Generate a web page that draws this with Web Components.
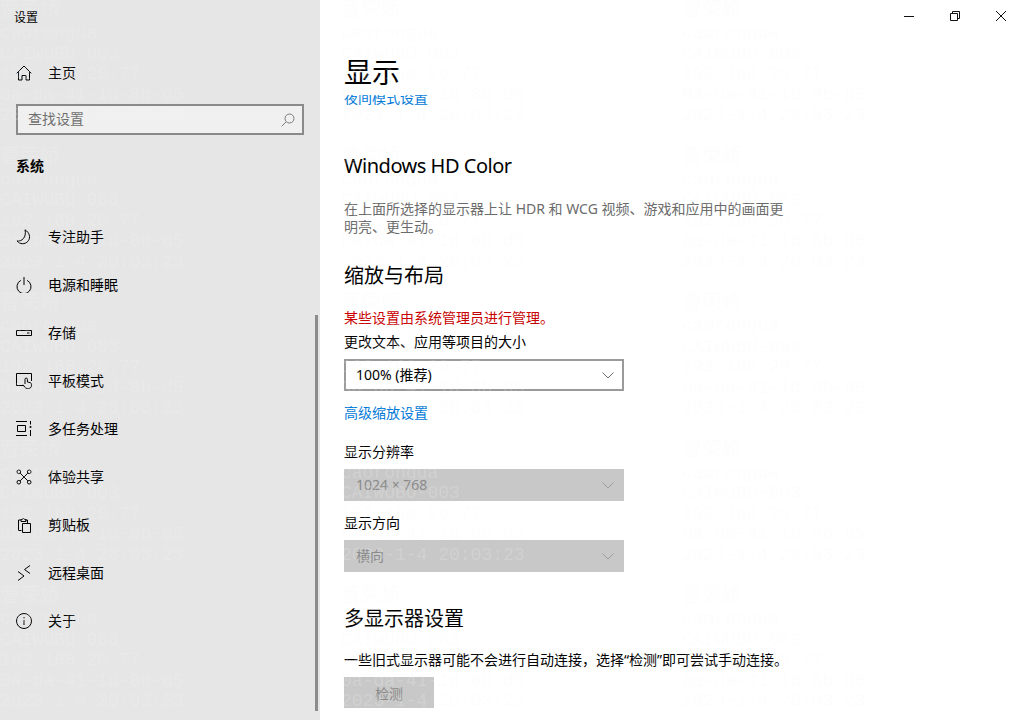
<!DOCTYPE html>
<html lang="zh">
<head>
<meta charset="utf-8">
<title>设置</title>
<style>
  html, body { margin: 0; height: 100%; overflow: hidden; background: #fff; }
  body { font: 14px "Noto Sans", "Noto Sans CJK SC", sans-serif; color: #000; }
</style>
</head>
<body>

<settings-app>
  <side-bar slot="side">
    <nav-item icon="home" slot="home">主页</nav-item>
    <search-box slot="search" placeholder="查找设置"></search-box>
    <nav-item icon="moon">专注助手</nav-item>
    <nav-item icon="power">电源和睡眠</nav-item>
    <nav-item icon="storage">存储</nav-item>
    <nav-item icon="tablet">平板模式</nav-item>
    <nav-item icon="tasks">多任务处理</nav-item>
    <nav-item icon="share">体验共享</nav-item>
    <nav-item icon="clipboard">剪贴板</nav-item>
    <nav-item icon="remote">远程桌面</nav-item>
    <nav-item icon="info">关于</nav-item>
  </side-bar>
  <display-page slot="main"></display-page>
</settings-app>

<script>
const ICONS = {
  home: '<path d="M.7 8.300 8 1l7.300 7.300M2.500 6.500v8.500h3.500v-4.500h4v4.500h3.500V6.500"/>',
  moon: '<path d="M9 .8c4.500 2.700 6 7.700 3 11.400-2.900 3.500-8.500 3.300-11-.3 4.800 1 9.800-3.800 8-11.100z"/>',
  power: '<path d="M4.800 3.400a7 7 0 1 0 6.400 0M8 0v8"/>',
  storage: '<path d="M.5 5.500h15v5H.5zM11 8h2.500"/>',
  tablet: '<path d="M7.500 12.500H.5V.500h15V8M9 11V6.300a1.200 1.200 0 0 1 2.400 0V9l2.600.6c.9.200 1.500.9 1.500 1.800v1.100c0 1.600-1.300 3-3 3h-1c-1.200 0-2.100-.5-2.800-1.400L7.200 11.800"/>',
  tasks: '<path d="M0 .5h11M0 14.500h11M1.500 4.500h8v6h-8zM14.500 0v3.500M14.500 9v6"/><circle cx="14.500" cy="6" r="1" fill="currentColor" stroke="none"/>',
  share: '<circle cx="2.800" cy="2.800" r="1.800"/><circle cx="13.200" cy="2.800" r="1.800"/><circle cx="2.800" cy="13.200" r="1.800"/><circle cx="13.200" cy="13.200" r="1.800"/><path d="m4.200 4.200 7.600 7.600M11.800 4.200l-7.600 7.600"/>',
  clipboard: '<path d="M5.500 13.500h-3V3h2.500M9 3h2.500v3M5 4.500V2.500h1.200a1.300 1.300 0 0 1 2.500 0H10v2zM6.500 6.500h8v9h-8z"/>',
  remote: '<path d="m2 6.500 6 4.500-6 4.500M14 .5 8.500 4.500l5.500 4"/>',
  info: '<circle cx="8" cy="8" r="7.500"/><path d="M8 7v5"/><circle cx="8" cy="4.800" r=".7" fill="currentColor" stroke="none"/>'
};

class NavItem extends HTMLElement {
  constructor() {
    super();
    this._root = this.attachShadow({mode: 'open'});
  }
  connectedCallback() {
    const icon = ICONS[this.getAttribute('icon')] || '';
    this._root.innerHTML = `
      <style>
        :host { display: flex; align-items: center; height: 48px; padding-left: 16px; color: #000; }
        svg { width: 16px; height: 16px; fill: none; stroke: currentColor; stroke-width: 1; flex: none; }
        span { margin-left: 16px; line-height: 20px; }
      </style>
      <svg viewBox="0 0 16 16">${icon}</svg>
      <span><slot></slot></span>
    `;
  }
}
customElements.define('nav-item', NavItem);

class SearchBox extends HTMLElement {
  constructor() {
    super();
    this._root = this.attachShadow({mode: 'open'});
  }
  connectedCallback() {
    this._root.innerHTML = `
      <style>
        :host {
          display: flex; align-items: center; justify-content: space-between;
          box-sizing: border-box; width: 288px; height: 31px; margin-left: 16px;
          padding: 0 7px 0 10px; border: 2px solid #8a8a8a; background: #f0f0f0; color: #6e6e6e;
        }
        span { margin-top: -4px; }
        svg { width: 14px; height: 14px; fill: none; stroke: #7a7a7a; stroke-width: 1; }
      </style>
      <span>${this.getAttribute('placeholder')}</span>
      <svg viewBox="0 0 14 14"><circle cx="8.500" cy="5.500" r="4.500"/><path d="M5.200 8.800.7 13.300"/></svg>
    `;
  }
}
customElements.define('search-box', SearchBox);

class SideBar extends HTMLElement {
  constructor() {
    super();
    this._root = this.attachShadow({mode: 'open'});
  }
  connectedCallback() {
    this._root.innerHTML = `
      <style>
        :host { display: flex; flex-direction: column; position: relative; width: 320px; height: 720px; background: #e6e6e6; }
        .title { font-size: 12px; line-height: 20px; margin: 8px 0 0 14px; color: #000; }
        ::slotted([slot="home"]) { margin-top: 21px; }
        ::slotted([slot="search"]) { margin-top: 7px; }
        .group { font-weight: 700; line-height: 20px; margin: 21px 0 37px 16px; color: #000; }
        .thumb { position: absolute; left: 315px; top: 315px; width: 3px; height: 396px; background: #8c8c8c; }
      </style>
      <div class="title">设置</div>
      <slot name="home"></slot>
      <slot name="search"></slot>
      <div class="group">系统</div>
      <slot></slot>
      <div class="thumb"></div>
    `;
  }
}
customElements.define('side-bar', SideBar);

class WinControls extends HTMLElement {
  constructor() {
    super();
    this._root = this.attachShadow({mode: 'open'});
  }
  connectedCallback() {
    this._root.innerHTML = `
      <style>
        :host { display: flex; justify-content: flex-end; height: 32px; margin-right: -11px; }
        span { display: flex; align-items: center; justify-content: center; width: 46px; }
        svg { width: 10px; height: 10px; fill: none; stroke: #111; stroke-width: 1; }
      </style>
      <span><svg viewBox="0 0 10 10"><path d="M0 5.500h10"/></svg></span>
      <span><svg viewBox="0 0 10 10"><path d="M.5 2.500h7v7h-7zM2.500 2.500v-2h7v7h-2"/></svg></span>
      <span><svg viewBox="0 0 10 10"><path d="m0 0 10 10M10 0 0 10"/></svg></span>
    `;
  }
}
customElements.define('win-controls', WinControls);

class ComboBox extends HTMLElement {
  constructor() {
    super();
    this._root = this.attachShadow({mode: 'open'});
  }
  connectedCallback() {
    this._root.innerHTML = `
      <style>
        :host {
          display: flex; align-items: center; justify-content: space-between;
          box-sizing: border-box; width: 280px; height: 32px; margin-top: 7px;
          padding: 0 10px 0 12px; background: #c8c8c8; color: #8a8a8a;
        }
        :host([enabled]) { background: #fff; border: 2px solid #9a9a9a; padding: 0 8px 0 10px; color: #000; }
        span { margin-top: -2px; }
        svg { width: 12px; height: 7px; fill: none; stroke: #9c9c9c; stroke-width: 1; }
        :host([enabled]) svg { stroke: #6a6a6a; }
      </style>
      <span><slot></slot></span>
      <svg viewBox="0 0 12 7"><path d="m.5.5 5.500 5.500L11.500.5"/></svg>
    `;
  }
}
customElements.define('combo-box', ComboBox);

class DisplayPage extends HTMLElement {
  constructor() {
    super();
    this._root = this.attachShadow({mode: 'open'});
  }
  connectedCallback() {
    this._root.innerHTML = `
      <style>
        :host { display: block; color: #000; }
        .page { padding-left: 24px; }
        h1 { margin: 20px 0 0; font-size: 28px; font-weight: 400; line-height: 40px; }
        h2 { margin: 0; font-size: 20px; font-weight: 400; line-height: 28px; }
        p { margin: 0; line-height: 20px; }
        a { display: block; color: #0078d7; line-height: 20px; text-decoration: none; }
        .clip { height: 11px; margin-top: 3px; overflow: hidden; }
        .clip a { margin-top: -7px; }
        .hdr { margin-top: 46px; letter-spacing: -.5px; }
        .note { width: 445px; margin-top: 20px; line-height: 18px; color: #6b6b6b; }
        .scale { margin-top: 26px; }
        .warn { margin-top: 18px; color: #c80000; }
        .label { margin-top: 12px; }
        .multi { margin-top: 33px; }
        .btn {
          display: flex; align-items: center; justify-content: center;
          width: 90px; height: 31px; margin-top: 7px; background: #c8c8c8; color: #8a8a8a;
        }
      </style>
      <win-controls></win-controls>
      <div class="page">
        <h1>显示</h1>
        <div class="clip"><a>夜间模式设置</a></div>
        <h2 class="hdr">Windows HD Color</h2>
        <p class="note">在上面所选择的显示器上让 HDR 和 WCG 视频、游戏和应用中的画面更明亮、更生动。</p>
        <h2 class="scale">缩放与布局</h2>
        <p class="warn">某些设置由系统管理员进行管理。</p>
        <p style="margin-top:4px">更改文本、应用等项目的大小</p>
        <combo-box enabled>100% (推荐)</combo-box>
        <a style="margin-top:12px">高级缩放设置</a>
        <p style="margin-top:19px">显示分辨率</p>
        <combo-box>1024 × 768</combo-box>
        <p class="label">显示方向</p>
        <combo-box>横向</combo-box>
        <h2 class="multi">多显示器设置</h2>
        <p style="margin-top:17px">一些旧式显示器可能不会进行自动连接，选择“检测”即可尝试手动连接。</p>
        <div class="btn">检测</div>
      </div>
    `;
  }
}
customElements.define('display-page', DisplayPage);

// faint tiled watermark over the whole window
class WaterMark extends HTMLElement {
  constructor() {
    super();
    this._root = this.attachShadow({mode: 'open'});
  }
  connectedCallback() {
    const tile = `<div class="tile"><b>曹荣娇</b>caorongua<br>CAIWUBU-003<br>192.168.20.77<br>0a-da-41-1d-8b-d5<br>2023-1-4 20:03:23</div>`;
    this._root.innerHTML = `
      <style>
        :host {
          position: absolute; left: 0; top: -4px; width: 1023px; height: 724px; overflow: hidden;
          display: grid; grid-template-columns: repeat(3, 341px); grid-auto-rows: 146.500px;
          pointer-events: none; color: rgba(248, 248, 248, .2);
          font: 18px/20.500px "Liberation Mono", monospace;
        }
        b { display: block; margin-bottom: 3px; font: 400 20px/24px "Noto Sans CJK SC", sans-serif; }
      </style>
      ${tile.repeat(15)}
    `;
  }
}
customElements.define('water-mark', WaterMark);

class SettingsApp extends HTMLElement {
  constructor() {
    super();
    this._root = this.attachShadow({mode: 'open'});
  }
  connectedCallback() {
    this._root.innerHTML = `
      <style>
        :host { display: flex; position: relative; width: 1013px; height: 720px; overflow: hidden; }
        .main { flex: 1; min-width: 0; }
      </style>
      <slot name="side"></slot>
      <div class="main"><slot name="main"></slot></div>
      <water-mark></water-mark>
    `;
  }
}
customElements.define('settings-app', SettingsApp);
</script>
</body>
</html>
